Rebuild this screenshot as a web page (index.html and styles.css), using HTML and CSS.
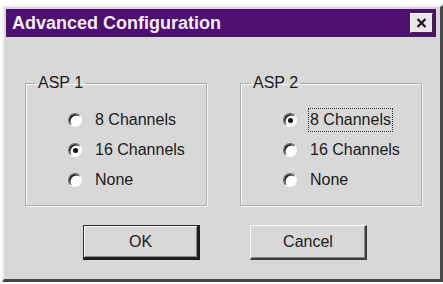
FILE: index.html
```html
<!DOCTYPE html>
<html lang="en">
<head>
    <meta charset="UTF-8">
    <meta name="viewport" content="width=device-width, initial-scale=1.0">
    <title>Advanced Configuration</title>
    <link rel="stylesheet" href="styles.css">
</head>
<body>
    <div class="window">
        <div class="titlebar">
            <span class="title">Advanced Configuration</span>
            <button type="button" class="close" aria-label="Close">
                <svg width="11" height="10" viewBox="0 0 11 10">
                    <path d="M1.5 1 L9.5 9 M9.5 1 L1.5 9" stroke="#1a1a1a" stroke-width="2.2" fill="none"/>
                </svg>
            </button>
        </div>

        <div class="content">
            <div class="groups">
                <fieldset class="group">
                    <legend>ASP 1</legend>
                    <div class="options">
                        <label class="option"><span class="radio"></span><span class="text">8 Channels</span></label>
                        <label class="option"><span class="radio checked"></span><span class="text">16 Channels</span></label>
                        <label class="option"><span class="radio"></span><span class="text">None</span></label>
                    </div>
                </fieldset>

                <fieldset class="group">
                    <legend>ASP 2</legend>
                    <div class="options">
                        <label class="option"><span class="radio checked"></span><span class="text focus">8 Channels</span></label>
                        <label class="option"><span class="radio"></span><span class="text">16 Channels</span></label>
                        <label class="option"><span class="radio"></span><span class="text">None</span></label>
                    </div>
                </fieldset>
            </div>

            <div class="buttons">
                <button type="button" class="btn default">OK</button>
                <button type="button" class="btn">Cancel</button>
            </div>
        </div>
    </div>
</body>
</html>
```

FILE: styles.css
```css
* {
    box-sizing: border-box;
}

body {
    margin: 0;
    background-color: #fff;
    font-family: 'Liberation Sans', Arial, sans-serif;
    font-size: 16px;
    color: #1a1a1a;
}

/* Dialog frame */
.window {
    margin: 5px 0 0 2px;
    width: 441px;
    height: 277px;
    padding: 2px 4px 2px 2px;
    background-color: #d8d8d8;
    border-style: solid;
    border-width: 2px 3px 3px 2px;
    border-color: #f2f2f2 #474747 #474747 #f2f2f2;
}

.titlebar {
    display: flex;
    align-items: center;
    justify-content: space-between;
    height: 28px;
    padding: 0 3px 0 6px;
    background-color: #4d0f70;
}

.title {
    color: #f6eefa;
    font-weight: bold;
    font-size: 18px;
}

.close {
    display: flex;
    align-items: center;
    justify-content: center;
    width: 23px;
    height: 20px;
    padding: 0;
    background-color: #ebe6ee;
    border-style: solid;
    border-width: 1px;
    border-color: #fff #3a2a44 #3a2a44 #fff;
}

.content {
    padding: 38px 0 0 19px;
}

/* Group boxes */
.groups {
    display: flex;
    gap: 33px;
}

.group {
    width: 182px;
    margin: 0;
    padding: 0;
    border: 1px solid #ababab;
    box-shadow: 1px 1px 0 #f7f7f7, inset 1px 1px 0 #f7f7f7;
}

.group legend {
    margin-left: 10px;
    padding: 0 2px;
    line-height: 16px;
}

.options {
    padding: 14px 0 10px 42px;
}

.option {
    display: flex;
    align-items: center;
    gap: 13px;
    height: 30px;
}

.radio {
    position: relative;
    width: 14px;
    height: 14px;
    border-radius: 50%;
    background-color: #fff;
    border: 1px solid;
    border-color: #6a6a6a #fafafa #fafafa #6a6a6a;
    box-shadow: inset 1.5px 1.5px 0 #222;
}

/* the selected dot sits over the circle */
.radio.checked::after {
    content: "";
    position: absolute;
    left: 3.5px;
    top: 3.5px;
    width: 5px;
    height: 5px;
    border-radius: 50%;
    background-color: #111;
}

.text {
    padding: 2px 1px;
    border: 1px solid transparent;
    margin-left: -2px;
}

.text.focus {
    border: 1px dotted #333;
}

/* Buttons */
.buttons {
    display: flex;
    gap: 50px;
    padding: 19px 0 0 58px;
}

.btn {
    width: 117px;
    height: 35px;
    font-family: 'Liberation Sans', Arial, sans-serif;
    font-size: 16px;
    color: #1a1a1a;
    background-color: #d8d8d8;
    border-style: solid;
    border-width: 1px 2px 2px 1px;
    border-color: #fbfbfb #3c3c3c #3c3c3c #fbfbfb;
    box-shadow: inset -1px -1px 0 #8a8a8a;
}

.btn.default {
    border-width: 1px 3px 3px 1px;
    border-color: #2a2a2a #1e1e1e #1e1e1e #2a2a2a;
    box-shadow: inset 1px 1px 0 #fbfbfb, inset -1px -1px 0 #8a8a8a;
}
```
